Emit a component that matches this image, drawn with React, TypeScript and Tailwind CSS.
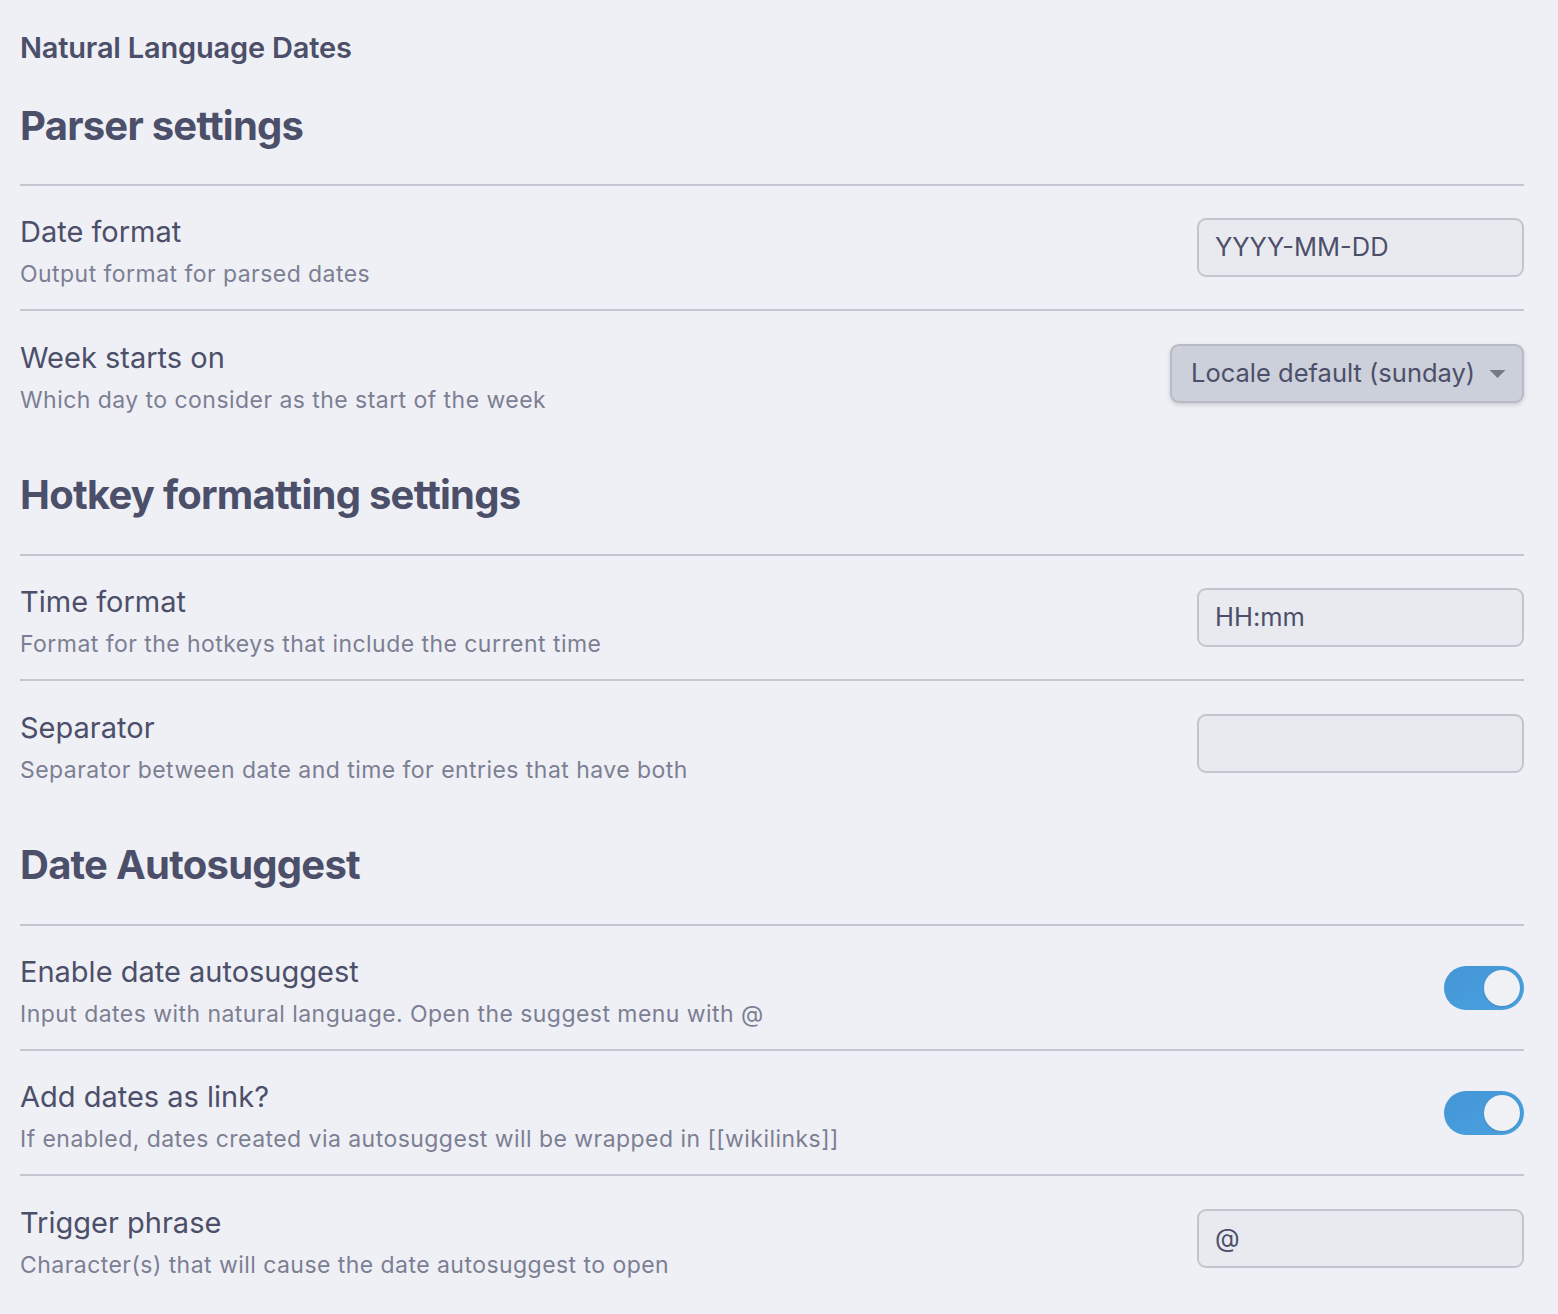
import React from "react";

const font = { fontFamily: "Inter, 'Noto Sans', sans-serif" };

function Row({ name, desc, children, last }: { name: string; desc: string; children: React.ReactNode; last?: boolean }) {
  return (
    <div className={"flex items-center justify-between h-[125px] " + (last ? "" : "border-b-2 border-[#c4c5d0]")}>
      <div className="flex flex-col pt-[7px]">
        <div className="text-[29px] leading-[36px] text-[#4c4f69]">{name}</div>
        <div className="text-[23px] leading-[30px] mt-[9px] text-[#7c7f93] tracking-[0.45px]">{desc}</div>
      </div>
      {children}
    </div>
  );
}

function TextInput({ value }: { value: string }) {
  return (
    <div className="w-[327px] h-[59px] rounded-[9px] border-2 border-[#c3c4cf] bg-[#e9eaf0] px-[16px] flex items-center text-[25.5px] text-[#4c4f69]">
      {value}
    </div>
  );
}

function Toggle() {
  return (
    <div className="w-[80px] h-[44px] rounded-full bg-gradient-to-br from-[#4495d6] to-[#4aa2df] flex items-center justify-end pr-[4px]">
      <div className="w-[36px] h-[36px] rounded-full bg-[#eff1f5] shadow-[0_1px_2px_rgba(0,0,0,0.15)]" />
    </div>
  );
}

function Heading({ children, first }: { children: React.ReactNode; first?: boolean }) {
  return (
    <div className={"flex items-center border-b-2 border-[#c4c5d0] " + (first ? "h-[118px]" : "h-[120px]")}>
      <h2 className="text-[40px] font-bold tracking-[-0.75px] text-[#4c4f69]">{children}</h2>
    </div>
  );
}

export default function App() {
  return (
    <div className="min-h-[1314px] w-full bg-[#eff0f5] pl-[20px] pr-[34px] pt-[28px]" style={font}>
      <div className="text-[29px] font-semibold leading-[40px] text-[#4c4f69] tracking-[-0.2px]">Natural Language Dates</div>
      <Heading first>Parser settings</Heading>
      <Row name="Date format" desc="Output format for parsed dates">
        <TextInput value="YYYY-MM-DD" />
      </Row>
      <Row name="Week starts on" desc="Which day to consider as the start of the week" last>
        <div className="w-[354px] h-[59px] rounded-[9px] border-2 border-[#b8bac6] bg-[#ccd0da] shadow-[0_2px_4px_rgba(0,0,0,0.15)] flex items-center justify-between pl-[19px] pr-[16px] text-[25.5px] text-[#4c4f69]">
          <span>Locale default (sunday)</span>
          <svg width="17" height="10" viewBox="0 0 17 10"><path d="M0.5 1 L16.5 1 L8.5 9 Z" fill="#777a86" /></svg>
        </div>
      </Row>
      <Heading>Hotkey formatting settings</Heading>
      <Row name="Time format" desc="Format for the hotkeys that include the current time">
        <TextInput value="HH:mm" />
      </Row>
      <Row name="Separator" desc="Separator between date and time for entries that have both" last>
        <TextInput value="" />
      </Row>
      <Heading>Date Autosuggest</Heading>
      <Row name="Enable date autosuggest" desc="Input dates with natural language. Open the suggest menu with @">
        <Toggle />
      </Row>
      <Row name="Add dates as link?" desc="If enabled, dates created via autosuggest will be wrapped in [[wikilinks]]">
        <Toggle />
      </Row>
      <Row name="Trigger phrase" desc="Character(s) that will cause the date autosuggest to open" last>
        <TextInput value="@" />
      </Row>
    </div>
  );
}
